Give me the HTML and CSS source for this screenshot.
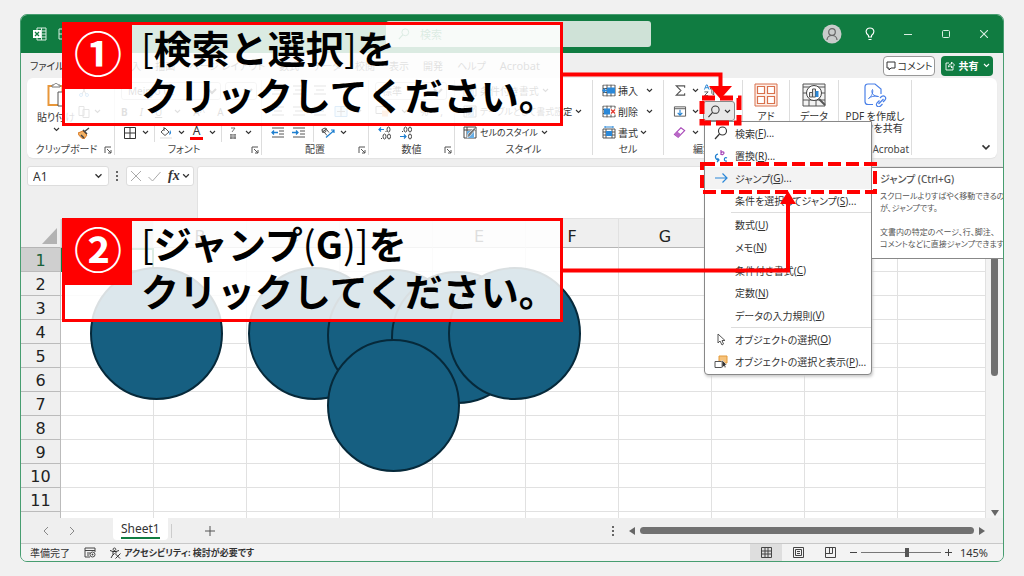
FILE: index.html
```html
<!DOCTYPE html>
<html lang="ja">
<head>
<meta charset="utf-8">
<title>Sheet1</title>
<link rel="stylesheet" href="styles.css">
</head>
<body>
<svg class="defs" aria-hidden="true">
  <symbol id="chev" viewBox="0 0 7 5"><path d="M1 1l2.5 2.5L6 1" fill="none" stroke="currentColor" stroke-width="1.100"/></symbol>
  <symbol id="launch" viewBox="0 0 8 8"><path d="M1 7V1h6M3 3l4 4M7 4v3H4" fill="none" stroke="#555"/></symbol>
  <symbol id="mag" viewBox="0 0 14 14"><circle cx="8.5" cy="5" r="4" fill="none" stroke="currentColor" stroke-width="1.1"/><path d="M5.5 8L1 13" stroke="currentColor" stroke-width="1.2"/></symbol>
  <symbol id="lines" viewBox="0 0 14 12"><path d="M1 1.500h12M3 5.500h8M1 9.500h12" stroke="#555" fill="none"/></symbol>
  <symbol id="cells" viewBox="0 0 14 12"><path d="M1 .5h12v11H1zM1 4h12M1 8h12M5 0v12M9 0v12" stroke="#555" fill="none"/></symbol>
  <symbol id="style" viewBox="0 0 14 13"><path d="M1 1h12v11H1z" fill="#fff" stroke="#444"/><path d="M1 4h12M4 1v11" stroke="#444"/><path d="M4 5h7v7H4z" fill="#66aee6"/><path d="M13 3L7 10l-3 2 1-4 6-6" fill="#777" stroke="#fff" stroke-width=".6"/></symbol>
</svg>
<main class="page">
  <div class="window">
    <header class="titlebar">
      <svg class="xl" viewBox="0 0 14 14"><path d="M4 1h9v12H4zM4 4h9M4 7h9M4 10h9M8.500 1v12" fill="none" stroke="#d9eee2"/><path d="M0 3h8v8H0z" fill="#fff"/><path d="M2 5l4 4M6 5L2 9" stroke="#107c41" stroke-width="1.300"/></svg>
      <svg class="save" viewBox="0 0 12 12"><path d="M1 1h10v10H1zM1 6h4" fill="none" stroke="#d9eee2"/></svg>
      <label class="search"><svg viewBox="0 0 14 14"><use href="#mag"/></svg><input type="text" placeholder="検索" aria-label="検索"></label>
      <div class="wincontrols">
        <button class="avatar" aria-label="アカウント"><svg viewBox="0 0 20 20"><circle cx="10" cy="10" r="9.500" fill="#c9cccb"/><circle cx="10" cy="8" r="3.300" fill="none" stroke="#666" stroke-width="1.200"/><path d="M5 16c0-6 10-6 10 0" fill="none" stroke="#666" stroke-width="1.200"/></svg></button>
        <button aria-label="ヒント"><svg class="bulb" viewBox="0 0 10 14"><path d="M3.500 10V8.500C-.5 5.500 1 1 5 1s5.500 4.500 1.500 7.500V10zM3.500 12.500h3" fill="none" stroke="#fff" stroke-width="1.100"/></svg></button>
        <button aria-label="最小化"><svg class="w8" viewBox="0 0 8 8"><path d="M0 4.500h8" stroke="#d9eee2"/></svg></button>
        <button aria-label="最大化"><svg class="w8" viewBox="0 0 8 8"><rect x=".5" y=".5" width="7" height="7" rx="1" fill="none" stroke="#d9eee2"/></svg></button>
        <button aria-label="閉じる"><svg class="w8" viewBox="0 0 8 8"><path d="M0 0l8 8M8 0L0 8" stroke="#d9eee2" stroke-width="1.100"/></svg></button>
      </div>
    </header>
    <nav class="tabs">
      <button>ファイル</button><button>ホーム</button><button>挿入</button><button>描画</button><button>ページ レイアウト</button><button>数式</button><button>データ</button><button>校閲</button><button>表示</button><button>開発</button><button>ヘルプ</button><button class="latin">Acrobat</button>
      <div class="tabactions">
        <button class="comment"><svg viewBox="0 0 10 10"><path d="M1 1h8v6H5L3 9V7H1z" fill="none" stroke="#333"/></svg>コメント</button>
        <button class="share"><svg viewBox="0 0 10 10"><path d="M4 2H1v7h7V6M3.500 6c0-2 1-3 3-3V1l3 3-3 3V5c-1.500 0-2 0-3 1z" fill="none" stroke="#fff" stroke-width=".9"/></svg>共有<svg class="chev" viewBox="0 0 7 5"><use href="#chev"/></svg></button>
      </div>
    </nav>
    <section class="ribbon">
      <div class="group clipboard">
        <div class="body split">
          <button class="tall"><svg class="paste" viewBox="0 0 18 24"><path d="M1.500 3h14v19h-14z" fill="#fff" stroke="#e8973a" stroke-width="2"/><path d="M5 4V2h2c0-2 4-2 4 0h2v2z" fill="#fff" stroke="#777"/><path d="M11 9h7v14h-7z" fill="#fff" stroke="#555"/></svg>貼り付け<svg class="chev" viewBox="0 0 7 5"><use href="#chev"/></svg></button>
          <div class="stack">
            <button aria-label="切り取り"><svg class="i12" viewBox="0 0 12 12"><path d="M3 0l5 9M9 0L4 9" stroke="#555"/><circle cx="3" cy="10" r="1.500" fill="none" stroke="#2b88d8"/><circle cx="9" cy="10" r="1.500" fill="none" stroke="#2b88d8"/></svg></button>
            <button aria-label="コピー"><svg class="i12" viewBox="0 0 12 12"><path d="M1 .5h5v9H1zM5 3.500h6v8H5z" fill="#fff" stroke="#555"/></svg><svg class="chev" viewBox="0 0 7 5"><use href="#chev"/></svg></button>
            <button aria-label="書式のコピー"><svg class="i12" viewBox="0 0 12 12"><path d="M0 6l5-2 4 4-3 4c-3-1-5-3-6-6z" fill="#f3b063" stroke="#d97a24"/><path d="M5 3l4 4M6 5l5-4M3 8l3 3" stroke="#444" stroke-width="1.500"/></svg></button>
          </div>
        </div>
        <div class="label">クリップボード<svg class="launch" viewBox="0 0 8 8"><use href="#launch"/></svg></div>
      </div>
      <div class="group font">
        <div class="body">
          <div class="line"><select class="fontname" aria-label="フォント名"><option>Meiryo UI</option></select><select class="fontsize" aria-label="サイズ"><option>11</option></select></div>
          <div class="line spread"><button><b>B</b></button><button><i>I</i></button><button><u>U</u></button><svg class="chev" viewBox="0 0 7 5"><use href="#chev"/></svg><button>A^</button><button>A</button></div>
          <div class="line icons"><button aria-label="罫線"><svg class="i12" viewBox="0 0 12 12"><path d="M.5.5h11v11H.5zM6 0v12M0 6h12" fill="none" stroke="#333"/></svg><svg class="chev" viewBox="0 0 7 5"><use href="#chev"/></svg></button><hr><button aria-label="塗りつぶし"><svg class="i12" viewBox="0 0 12 12"><path d="M1 5l4-4 4 4-4 3.500zM4 0v4" fill="#fff" stroke="#555"/><path d="M10 3c2 3 1 4-1 5z" fill="#2b88d8"/><path d="M0 10h12v2H0z" fill="#eee"/></svg><svg class="chev" viewBox="0 0 7 5"><use href="#chev"/></svg></button><button class="fontcolor" aria-label="フォントの色"><span>A</span><svg class="chev" viewBox="0 0 7 5"><use href="#chev"/></svg></button><hr><button aria-label="ふりがな"><svg class="i12" viewBox="0 0 12 12"><path d="M4 1h4L5 5" fill="none" stroke="#777"/><path d="M3 7h6v5H3z" fill="#888"/><path d="M3 9h6M6 7v5" stroke="#ddd" stroke-width=".6"/></svg><svg class="chev" viewBox="0 0 7 5"><use href="#chev"/></svg></button></div>
        </div>
        <div class="label">フォント<svg class="launch" viewBox="0 0 8 8"><use href="#launch"/></svg></div>
      </div>
      <div class="group align">
        <div class="body">
          <div class="line"><svg class="i14" viewBox="0 0 14 12"><use href="#lines"/></svg><svg class="i14" viewBox="0 0 14 12"><use href="#lines"/></svg><svg class="i14" viewBox="0 0 14 12"><use href="#lines"/></svg></div>
          <div class="line"><svg class="i14" viewBox="0 0 14 12"><use href="#lines"/></svg><svg class="i14" viewBox="0 0 14 12"><use href="#lines"/></svg><svg class="i14" viewBox="0 0 14 12"><use href="#lines"/></svg><svg class="i14" viewBox="0 0 14 12"><path d="M1 1h12v10H1z" fill="#cfe6f8" stroke="#2b88d8"/><path d="M3 6h8M7 1v10" stroke="#555"/></svg><svg class="chev" viewBox="0 0 7 5"><use href="#chev"/></svg></div>
          <div class="line"><button aria-label="インデントを減らす"><svg class="i14" viewBox="0 0 14 12"><path d="M1 1.500h12M8 4.500h5M8 7.500h5M1 10.500h12" stroke="#555"/><path d="M7 6H1m2-2L1 6l2 2" stroke="#1e7fd0" stroke-width="1.300" fill="none"/></svg></button><button aria-label="インデントを増やす"><svg class="i14" viewBox="0 0 14 12"><path d="M1 1.500h12M8 4.500h5M8 7.500h5M1 10.500h12" stroke="#555"/><path d="M0 6h6M4 4l2 2-2 2" stroke="#1e7fd0" stroke-width="1.300" fill="none"/></svg></button><hr><button aria-label="方向"><svg class="i14" viewBox="0 0 14 12"><path d="M1 3l5 6M4 1l4 5M1 6l5-4" stroke="#555"/><circle cx="3" cy="4" r="2" fill="none" stroke="#555"/><path d="M5 11l8-7M10 3.500h3v3" stroke="#1e7fd0" fill="none" stroke-width="1.200"/></svg><svg class="chev" viewBox="0 0 7 5"><use href="#chev"/></svg></button></div>
        </div>
        <div class="label">配置<svg class="launch" viewBox="0 0 8 8"><use href="#launch"/></svg></div>
      </div>
      <div class="group number">
        <div class="body">
          <div class="line"><select class="numfmt" aria-label="表示形式"><option>標準</option></select></div>
          <div class="line spread"><svg class="i14" viewBox="0 0 14 12"><path d="M1 1h12v7H1z" fill="#fff" stroke="#555"/><path d="M7 5h6v6H7z" fill="#f4a261"/></svg><svg class="chev" viewBox="0 0 7 5"><use href="#chev"/></svg><button>%</button><button>,</button></div>
          <div class="line"><button class="dec" aria-label="小数点以下の表示桁数を増やす"><svg viewBox="0 0 14 14"><path d="M6 3.500H1m2-2l-2 2 2 2" stroke="#1e7fd0" fill="none" stroke-width="1.200"/><g fill="none" stroke="#444"><ellipse cx="10.500" cy="3.500" rx="1.500" ry="2.500"/><ellipse cx="6.500" cy="10.500" rx="1.500" ry="2.500"/><ellipse cx="11" cy="10.500" rx="1.500" ry="2.500"/></g><path d="M3 12.500h1M7.500 5.500h1" stroke="#444"/></svg></button><button class="dec" aria-label="小数点以下の表示桁数を減らす"><svg viewBox="0 0 14 14"><path d="M1 10.500h6m-2-2l2 2-2 2" stroke="#1e7fd0" fill="none" stroke-width="1.200"/><g fill="none" stroke="#444"><ellipse cx="6.500" cy="3.500" rx="1.500" ry="2.500"/><ellipse cx="11" cy="3.500" rx="1.500" ry="2.500"/><ellipse cx="11" cy="10.500" rx="1.500" ry="2.500"/></g><path d="M3 5.500h1" stroke="#444"/></svg></button></div>
        </div>
        <div class="label">数値<svg class="launch" viewBox="0 0 8 8"><use href="#launch"/></svg></div>
      </div>
      <div class="group styles">
        <div class="body">
          <button class="line"><svg class="i14" viewBox="0 0 14 13"><use href="#style"/></svg>条件付き書式<svg class="chev" viewBox="0 0 7 5"><use href="#chev"/></svg></button>
          <button class="line long"><svg class="i14" viewBox="0 0 14 13"><use href="#style"/></svg>テーブルとして書式設定<svg class="chev" viewBox="0 0 7 5"><use href="#chev"/></svg></button>
          <button class="line long"><svg class="i14" viewBox="0 0 14 13"><use href="#style"/></svg>セルのスタイル<svg class="chev" viewBox="0 0 7 5"><use href="#chev"/></svg></button>
        </div>
        <div class="label">スタイル</div>
      </div>
      <div class="group cellgroup">
        <div class="body">
          <button class="line"><svg class="i14" viewBox="0 0 14 12"><use href="#cells"/><path d="M5 3h8v6H5z" fill="#2b88d8"/><path d="M6 6H1m2-2L1 6l2 2" stroke="#2b88d8" stroke-width="1.500" fill="none"/></svg>挿入<svg class="chev wide" viewBox="0 0 7 5"><use href="#chev"/></svg></button>
          <button class="line"><svg class="i14" viewBox="0 0 14 12"><use href="#cells"/><path d="M2 3h6v6H2z" fill="#2b88d8"/><path d="M8 3h6v6H8z" fill="#fff"/><path d="M9 4l4 4M13 4L9 8" stroke="#e0352b" stroke-width="1.300"/></svg>削除<svg class="chev wide" viewBox="0 0 7 5"><use href="#chev"/></svg></button>
          <button class="line"><svg class="i14" viewBox="0 0 14 13"><path d="M1 3h12v9H1zM1 6h12M1 9h12M4 3v9M10 3v9" fill="none" stroke="#555"/><path d="M4 5h6v5H4z" fill="#2b88d8"/><path d="M3 1h8M3 0v2M11 0v2" stroke="#2b88d8"/></svg>書式<svg class="chev" viewBox="0 0 7 5"><use href="#chev"/></svg></button>
        </div>
        <div class="label">セル</div>
      </div>
      <div class="group edit">
        <div class="body split">
          <div class="stack left">
            <button aria-label="合計"><svg class="i14" viewBox="0 0 14 14"><path d="M12 4V2H3l5 5-5 5h9v-2" fill="none" stroke="#555" stroke-width="1.200"/></svg><svg class="chev" viewBox="0 0 7 5"><use href="#chev"/></svg></button>
            <button aria-label="フィル"><svg class="i14" viewBox="0 0 14 14"><path d="M1 2h12v10H1zM1 4h12" fill="none" stroke="#555"/><path d="M7 5v6M4.500 8.500L7 11l2.500-2.500" stroke="#1e7fd0" stroke-width="1.200" fill="none"/></svg><svg class="chev" viewBox="0 0 7 5"><use href="#chev"/></svg></button>
            <button aria-label="クリア"><svg class="i14" viewBox="0 0 14 14"><path d="M1 9l7-7 4 3-7 7z" fill="#fff" stroke="#a848b8" stroke-width="1.200"/><path d="M1 9l3-3 4 3-3 3z" fill="#b968c7"/></svg><svg class="chev" viewBox="0 0 7 5"><use href="#chev"/></svg></button>
          </div>
          <div class="stack right">
            <button aria-label="並べ替えとフィルター"><svg class="i14" viewBox="0 0 14 14"><path d="M1 6l2-5h1l2 5M2 4h3" stroke="#1e7fd0" fill="none"/><path d="M1 8.500h4l-4 4h4M7 4h6l-2 3v5l-2-2V7z" stroke="#555" fill="none"/></svg><svg class="chev" viewBox="0 0 7 5"><use href="#chev"/></svg></button>
            <button class="find" aria-label="検索と選択"><svg class="i14" viewBox="0 0 14 14"><use href="#mag"/></svg><svg class="chev" viewBox="0 0 7 5"><use href="#chev"/></svg></button>
          </div>
        </div>
        <div class="label">編集</div>
      </div>
      <div class="group addin"><button class="tall"><svg class="i24" viewBox="0 0 24 24"><path d="M1 1h22v22H1z" fill="#fdf0ea" stroke="#d9714c"/><path d="M3.500 3.500h7v7h-7zM13.500 3.500h7v7h-7zM3.500 13.500h7v7h-7zM13.500 13.500h7v7h-7z" fill="#fff" stroke="#d9714c" stroke-width="1.200"/></svg>アド</button></div>
      <div class="group data"><button class="tall"><svg class="i24" viewBox="0 0 24 24"><path d="M1 1h22v22H1zM1 4h22M1 10h22M1 17h22M7 17v6M14 17v6" fill="#f3f3f3" stroke="#555"/><circle cx="12" cy="10" r="7.500" fill="#fff" stroke="#444"/><path d="M7.500 9.500h3V14h-3zM10.500 6h3v8h-3z" fill="#ddd" stroke="#555"/><path d="M13.500 8h3v6h-3z" fill="#2b88d8"/><path d="M17 16l6 6" stroke="#555" stroke-width="2"/></svg>データ</button></div>
      <div class="group acrobat"><button class="tall"><svg class="i24" viewBox="0 0 24 24"><path d="M10 21.500H5c-2 0-3-1-3-3V4c0-2 1-3 3-3h7l6 5v5" fill="none" stroke="#4a80e8" stroke-width="1.200"/><path d="M5.500 15.500c3-2 5-6 4-9-2 3 1 7 6 7-4-1-8 0-10 2z" fill="none" stroke="#4a80e8"/><path d="M17 15l1.500-1.500c2.500-2 5.500 1 3.500 3.500l-2 2M16.500 17.500L14 20c-2 2.500 1.500 5 3.500 3l2-2M15.500 21l5-5" fill="none" stroke="#4a80e8" stroke-width="1.200"/></svg><span>PDF を作成し</span><span>リンクを共有</span></button><div class="label">Adobe Acrobat</div></div>
      <button class="collapse" aria-label="リボンを折りたたむ"><svg viewBox="0 0 7 5"><use href="#chev"/></svg></button>
    </section>
    <section class="formulabar">
      <label class="namebox"><input type="text" value="A1" aria-label="名前ボックス"><svg viewBox="0 0 7 5"><use href="#chev"/></svg></label>
      <span class="dots"></span>
      <div class="fx"><svg viewBox="0 0 10 10"><path d="M0 0l10 10M10 0L0 10" stroke="#aaa"/></svg><svg class="tick" viewBox="0 0 12 10"><path d="M0 6l4 4 8-9" fill="none" stroke="#aaa"/></svg><i>fx</i><svg class="fxc" viewBox="0 0 7 5"><use href="#chev"/></svg></div>
      <textarea aria-label="数式バー"></textarea>
    </section>
    <section class="sheet">
      <div class="grid">
        <table>
          <thead><tr><th class="corner"><span></span></th><th class="sel">A</th><th>B</th><th>C</th><th>D</th><th>E</th><th>F</th><th>G</th><th>H</th><th>I</th><th></th></tr></thead>
          <tbody>
            <tr><th class="sel">1</th><td class="active"></td><td></td><td></td><td></td><td></td><td></td><td></td><td></td><td></td><td></td></tr>
            <tr><th>2</th><td></td><td></td><td></td><td></td><td></td><td></td><td></td><td></td><td></td><td></td></tr>
            <tr><th>3</th><td></td><td></td><td></td><td></td><td></td><td></td><td></td><td></td><td></td><td></td></tr>
            <tr><th>4</th><td></td><td></td><td></td><td></td><td></td><td></td><td></td><td></td><td></td><td></td></tr>
            <tr><th>5</th><td></td><td></td><td></td><td></td><td></td><td></td><td></td><td></td><td></td><td></td></tr>
            <tr><th>6</th><td></td><td></td><td></td><td></td><td></td><td></td><td></td><td></td><td></td><td></td></tr>
            <tr><th>7</th><td></td><td></td><td></td><td></td><td></td><td></td><td></td><td></td><td></td><td></td></tr>
            <tr><th>8</th><td></td><td></td><td></td><td></td><td></td><td></td><td></td><td></td><td></td><td></td></tr>
            <tr><th>9</th><td></td><td></td><td></td><td></td><td></td><td></td><td></td><td></td><td></td><td></td></tr>
            <tr><th>10</th><td></td><td></td><td></td><td></td><td></td><td></td><td></td><td></td><td></td><td></td></tr>
            <tr><th>11</th><td></td><td></td><td></td><td></td><td></td><td></td><td></td><td></td><td></td><td></td></tr>
            <tr><th></th><td></td><td></td><td></td><td></td><td></td><td></td><td></td><td></td><td></td><td></td></tr>
          </tbody>
        </table>
        <div class="ball b1"></div><div class="ball b2"></div><div class="ball b3"></div><div class="ball b4"></div><div class="ball b5"></div><div class="ball b6"></div>
      </div>
      <div class="vscroll"><div class="vthumb"></div><span class="down"></span></div>
    </section>
    <section class="sheettabs">
      <svg class="nav" viewBox="0 0 6 8"><path d="M5 0L1 4l4 4" fill="none" stroke="#888"/></svg>
      <svg class="nav" viewBox="0 0 6 8"><path d="M1 0l4 4-4 4" fill="none" stroke="#888"/></svg>
      <button class="tab"><span>Sheet1</span></button>
      <hr>
      <button class="add" aria-label="新しいシート"><svg viewBox="0 0 10 10"><path d="M5 0v10M0 5h10" stroke="#555"/></svg></button>
      <span class="dots tabdots"></span>
      <div class="hscroll"><span class="larr"></span><div class="hthumb"></div><span class="rarr"></span></div>
    </section>
    <footer class="status">
      <span>準備完了</span>
      <svg class="macro" viewBox="0 0 12 11"><path d="M11 5V1H1v9h5M1 3.500h10M3 6h3M3 8h2" fill="none" stroke="#444"/><circle cx="8.500" cy="7.500" r="2.500" fill="#fff" stroke="#444"/><circle cx="8.500" cy="7.500" r="1" fill="#444"/></svg>
      <svg class="access" viewBox="0 0 12 12"><path d="M1 3.500l3 1v3l-2 3.500M4 4.500h3l3-1M7 4.500v2M5.500 1a1.300 1.300 0 1 1-.1 0M4 8l1.500-1.500M6 6.500l5 5M11.500 6.500l-5 5" fill="none" stroke="#333"/></svg>
      <strong>アクセシビリティ: 検討が必要です</strong>
      <div class="views">
        <button class="on" aria-label="標準"><svg viewBox="0 0 11 11"><path d="M.5.5h10v10H.5zM.5 4h10M.5 7h10M4 .5v10M7 .5v10" fill="none" stroke="#444"/></svg></button>
        <button aria-label="ページ レイアウト"><svg viewBox="0 0 11 11"><path d="M.5.5h10v10H.5zM2.500 2.500h6v6h-6zM4 4.500h3M4 6.500h3" fill="none" stroke="#444"/></svg></button>
        <button aria-label="改ページ プレビュー"><svg viewBox="0 0 11 11"><path d="M.5.5h10v10H.5zM.5 6.500h7v-6M4.500.5v6" fill="none" stroke="#444"/></svg></button>
      </div>
      <button class="zoom" aria-label="縮小"><svg viewBox="0 0 7 7"><path d="M0 3.500h7" stroke="#444"/></svg></button>
      <input type="range" aria-label="ズーム" min="0" max="100" value="58">
      <button class="zoom" aria-label="拡大"><svg viewBox="0 0 7 7"><path d="M0 3.500h7M3.500 0v7" stroke="#444"/></svg></button>
      <span class="percent">145%</span>
    </footer>
    <div class="menu" role="menu">
      <button><svg viewBox="0 0 14 14"><use href="#mag"/></svg>検索(<u>F</u>)...</button>
      <button><svg viewBox="0 0 14 14"><path d="M7 1v5M7 4c1-2 3-1 3 0s-2 2.500-3 1" fill="none" stroke="#a848b8" stroke-width="1.200"/><path d="M4 5C0 6 1 11 5 11M3.500 9L5 11l-2 2M13 9c-3-2-4 4 0 3" fill="none" stroke="#1e7fd0" stroke-width="1.200"/></svg>置換(<u>R</u>)...</button>
      <button class="hot"><svg viewBox="0 0 14 14"><path d="M1 7h12M8.500 2.500L13 7l-4.500 4.500" fill="none" stroke="#2b88d8" stroke-width="1.200"/></svg>ジャンプ(<u>G</u>)...</button>
      <button>条件を選択してジャンプ(<u>S</u>)...</button>
      <hr>
      <button>数式(<u>U</u>)</button>
      <button>メモ(<u>N</u>)</button>
      <button>条件付き書式(<u>C</u>)</button>
      <button>定数(<u>N</u>)</button>
      <button>データの入力規則(<u>V</u>)</button>
      <hr>
      <button><svg viewBox="0 0 14 14"><path d="M4 2v9l2-2 2 4 1.500-1L8 8.500h3z" fill="#fff" stroke="#555"/></svg>オブジェクトの選択(<u>O</u>)</button>
      <button><svg viewBox="0 0 14 14"><path d="M5 1h8v7H5z" fill="#f6c27a" stroke="#e39a3a"/><path d="M1 6.500h7v6H1z" fill="#fff" stroke="#555"/><path d="M8 5v8l2-2 1 2 1-1-1-2h2z" fill="#333" stroke="#fff" stroke-width=".5"/></svg>オブジェクトの選択と表示(<u>P</u>)...</button>
    </div>
    <aside class="tip"><h2>ジャンプ (Ctrl+G)</h2><p>スクロールよりすばやく移動できるの<br>が、ジャンプです。</p><p>文書内の特定のページ、行、脚注、<br>コメントなどに直接ジャンプできます</p></aside>
  </div>
  <div class="callout first"><span class="num">①</span><p><span class="thin">[</span>検索と選択<span class="thin">]</span>を<br>クリックしてください。</p></div>
  <div class="callout second"><span class="num">②</span><p><span class="thin">[</span>ジャンプ<span class="thin">(</span>G<span class="thin">)]</span>を<br>クリックしてください。</p></div>
  <svg class="arrows" width="1024" height="576" viewBox="0 0 1024 576" aria-hidden="true">
    <g fill="none" stroke="#f00" stroke-width="4">
      <path d="M563 74.500H720.500V88M563 270.500H788V203"/>
      <rect x="702" y="98" width="37" height="25" stroke-dasharray="13 5" stroke-width="5"/>
      <rect x="702" y="164" width="173" height="28" stroke-dasharray="13 5"/>
    </g>
    <path d="M709 86h23l-11.500 13zM780 204h16l-8-13z" fill="#f00"/>
  </svg>
</main>
</body>
</html>
```
FILE: styles.css
```css
* { box-sizing: border-box; }
body { margin: 0; background: #f1f1f1; font-family: "Noto Sans", "Noto Sans CJK JP", sans-serif; font-size: 10px; color: #333; font-feature-settings: "palt"; }
button, input, select, textarea { font: inherit; font-feature-settings: inherit; color: inherit; border: 0; background: none; padding: 0; margin: 0; }
button { display: flex; align-items: center; white-space: nowrap; }
svg { flex: none; }
hr { border: 0; margin: 0; background: #ddd; }
.defs { position: absolute; width: 0; height: 0; }
.page { position: relative; height: 100vh; padding: 14px 20px; display: flex; overflow: hidden; }
.window { position: relative; flex: 1; min-width: 0; display: flex; flex-direction: column; background: #efefef; border: 1px solid #479d70; border-radius: 7px; overflow: hidden; }
.chev { width: 7px; height: 5px; }

.titlebar { flex: none; height: 38px; background: #107c41; display: flex; align-items: center; padding-left: 12px; }
.xl { width: 14px; height: 14px; }
.save { width: 12px; height: 12px; margin-left: 11px; }
.search { margin-left: 316px; width: 265px; height: 26px; border-radius: 3px; background: #cfe2d7; color: #107c41; display: flex; align-items: center; gap: 10px; padding-left: 12px; font-size: 11px; }
.search svg { width: 12px; height: 12px; }
.search input { width: 200px; }
.search input::placeholder { color: #107c41; opacity: 1; }
.wincontrols { margin-left: auto; display: flex; align-items: center; }
.wincontrols button { width: 38px; height: 38px; justify-content: center; }
.avatar svg { width: 20px; height: 20px; }
.bulb { width: 10px; height: 14px; }
.w8 { width: 8px; height: 8px; }

.tabs { flex: none; height: 25px; display: flex; align-items: center; gap: 14px; padding: 0 10px 0 9px; }
.latin { font-size: 11px; }
.tabactions { margin-left: auto; display: flex; gap: 6px; }
.tabactions button { height: 20px; border-radius: 4px; padding: 0 3px; gap: 2px; justify-content: center; }
.tabactions svg { width: 10px; height: 10px; }
.comment { width: 52px; background: #fff; border: 1px solid #999; }
.tabactions .share { width: 52px; background: #107c41; color: #fff; font-weight: 700; gap: 4px; }
.tabactions .share .chev { width: 7px; height: 5px; }

.ribbon { flex: none; height: 80px; margin: 0 6px; background: #fff; border-radius: 6px; display: flex; padding: 2px 6px 3px 0; box-shadow: 0 1px 1px #e2e2e2; }
.group { flex: none; border-right: 1px solid #ddd; display: flex; flex-direction: column; overflow: hidden; }
.body { height: 63px; }
.body .line, .stack button { height: 21px; display: flex; align-items: center; gap: 4px; }
.split { display: flex; }
.label { position: relative; text-align: center; line-height: 12px; color: #444; white-space: nowrap; }
.launch { position: absolute; right: 2px; top: 3px; width: 8px; height: 8px; }
.clipboard .label, .font .label { padding-right: 8px; }
.tall { flex-direction: column; width: 100%; line-height: 12px; padding-top: 3px; }
.i12 { width: 12px; height: 12px; }
.i14 { width: 14px; height: 13px; }
.i24 { width: 24px; height: 24px; margin-bottom: 3px; }
.clipboard { width: 88px; }
.clipboard .tall { width: 51px; gap: 4px; padding-left: 7px; }
.paste { width: 18px; height: 24px; }
.font { width: 147px; }
.font .line { padding-left: 6px; }
.font select, .numfmt { height: 18px; border: 1px solid #bbb; border-radius: 3px; padding: 0 2px; }
.fontname { width: 100px; }
.fontsize { width: 32px; }
.body .spread { gap: 12px; }
.body .icons { gap: 5px; padding-left: 9px; }
.body .icons button { gap: 6px; }
.line hr { width: 1px; height: 18px; }
.fontcolor span { width: 13px; line-height: 12px; font-size: 12px; border-bottom: 3px solid #f00; text-align: center; }
.align { width: 107px; }
.align .line { gap: 7px; padding-left: 9px; }
.align button { gap: 5px; }
.number { width: 86px; }
.number .line { padding-left: 6px; }
.numfmt { width: 72px; }
.number .line:last-child { gap: 7px; padding-left: 9px; }
.dec svg { width: 14px; height: 14px; }
.styles { width: 138px; }
.styles .line { padding-left: 8px; gap: 3px; }
.styles .long { font-size: 9px; }
.cellgroup { width: 71px; font-size: 10px; }
.cellgroup .line { padding-left: 9px; gap: 2px; }
.cellgroup .wide { margin-left: 6px; }
.edit { width: 79px; }
.left { width: 36px; padding-left: 9px; margin-right: 3px; }
.left button { gap: 5px; }
.right button { gap: 3px; }
.stack .find { width: 32px; height: 20px; padding-left: 3px; border: 1px solid #888; border-radius: 3px; background: #e8e8e8; }
.addin { width: 47px; }
.data { width: 49px; }
.acrobat { width: 73px; }
.acrobat .label { margin-top: auto; align-self: flex-end; padding-right: 2px; }
.collapse { margin-left: auto; align-self: flex-end; height: 16px; }
.collapse svg { width: 10px; height: 7px; }

.formulabar { flex: none; display: flex; padding: 8px 0 0 6px; height: 61px; align-items: flex-start; }
.namebox { width: 82px; height: 20px; display: flex; align-items: center; padding: 0 5px; background: #fff; border: 1px solid #ddd; border-radius: 3px; font-size: 12px; }
.namebox input { flex: 1; min-width: 0; }
.namebox svg, .fxc { width: 9px; height: 6px; }
.dots { width: 2px; height: 10px; margin: 5px 8px 0 7px; background: repeating-linear-gradient(#666 0 2px, transparent 2px 4px); }
.fx { width: 68px; height: 20px; display: flex; align-items: center; gap: 7px; padding-left: 4px; background: #fff; border: 1px solid #ddd; border-radius: 3px; }
.fx svg { width: 10px; height: 10px; }
.fx .tick { width: 13px; }
.fx i { font: italic 700 14px "Liberation Serif", serif; }
.fx .fxc { width: 8px; height: 6px; margin-left: -5px; }
textarea { flex: 1; align-self: stretch; margin-left: 3px; background: #fff; border: 1px solid #e2e2e2; border-radius: 3px 0 0 0; resize: none; }

.sheet { flex: 1; min-height: 0; display: flex; }
.grid { position: relative; flex: 1; min-width: 0; overflow: hidden; background: #fff; }
table { width: 100%; table-layout: fixed; border-collapse: separate; border-spacing: 0; font-family: "DejaVu Sans", sans-serif; font-size: 16px; }
th, td { height: 24px; padding: 0; border-right: 1px solid #e1e1e1; border-bottom: 1px solid #e1e1e1; line-height: 20px; }
th { width: 93px; font-weight: 400; color: #222; background: #efefef; }
thead th { height: 29px; border-bottom-color: #b5b5b5; padding-top: 7px; }
thead th:last-child { width: auto; }
thead .corner { width: 40px; padding: 0; }
.corner span { display: block; margin: 6px 3px 0 21px; height: 16px; background: #b3b3b3; clip-path: polygon(100% 0, 100% 100%, 0 100%); }
tbody th { border-color: #bbb; padding-top: 2px; }
.sel { background: #cfcfcf; color: #17613a; }
.active { border: 2px solid #107c41; }
.ball { position: absolute; width: 133px; height: 133px; border: 2px solid #06293a; border-radius: 50%; background: #165f81; }
.b1 { left: 69px; top: 48px; }
.b2 { left: 227px; top: 48px; }
.b3 { left: 306px; top: 50px; }
.b4 { left: 370px; top: 52px; }
.b5 { left: 427px; top: 48px; }
.b6 { left: 306px; top: 120px; }
.vscroll { width: 17px; background: #f3f3f3; display: flex; flex-direction: column; align-items: center; justify-content: space-between; padding-bottom: 2px; }
.vthumb { width: 7px; height: 133px; margin-top: 24px; border-radius: 4px; background: #717171; }
.down { border: 4px solid transparent; border-top: 6px solid #666; border-bottom: 0; }

.sheettabs { flex: none; height: 25px; display: flex; align-items: center; padding: 0 18px 0 22px; background: #efefef; }
.nav { width: 6px; height: 8px; margin-right: 20px; }
.tab { height: 22px; align-self: flex-start; margin-left: 18px; padding: 0 8px; background: #fff; border-radius: 0 0 4px 4px; font-size: 12px; }
.tab span { border-bottom: 2px solid #107c41; line-height: 17px; }
.sheettabs hr { width: 1px; height: 14px; margin-left: 3px; background: #ccc; }
.add { margin-left: 33px; }
.add svg { width: 10px; height: 10px; }
.tabdots { margin: 0 15px 0 auto; }
.hscroll { width: 356px; display: flex; align-items: center; justify-content: space-between; gap: 5px; }
.hthumb { flex: 1; height: 7px; border-radius: 4px; background: #717171; }
.larr, .rarr { border: 4px solid transparent; border-width: 4px 6px; }
.larr { border-right-color: #666; border-left: 0; }
.rarr { border-left-color: #666; border-right: 0; }

.status { flex: none; height: 18px; border-top: 1px solid #c8c8c8; background: #f3f3f3; display: flex; align-items: center; padding: 0 15px 0 9px; font-size: 10px; line-height: 16px; }
.status strong { font-size: 9px; }
.macro { width: 12px; height: 11px; margin-left: 14px; }
.access { width: 12px; height: 12px; margin: 0 3px 0 13px; }
.views { margin-left: auto; display: flex; align-self: stretch; }
.views button { width: 32px; justify-content: center; }
.views .on { background: #dedede; }
.views svg { width: 11px; height: 11px; }
.zoom { margin: 0 4px; }
.zoom svg { width: 7px; height: 7px; }
.status input { appearance: none; width: 80px; height: 16px; background: linear-gradient(#777, #777) center / 100% 1px no-repeat; }
.status input::-webkit-slider-thumb { appearance: none; width: 4px; height: 9px; background: #555; }
.percent { width: 32px; text-align: right; font-size: 11px; }

.menu { position: absolute; left: 683px; top: 106px; width: 168px; height: 254px; background: #fff; border: 1px solid #888; border-radius: 0 0 4px 4px; display: flex; flex-direction: column; justify-content: space-between; padding-bottom: 1px; box-shadow: 1px 2px 3px #ccc; }
.menu button { height: 22px; padding-left: 30px; }
.menu button svg { width: 14px; height: 14px; margin: 0 7px 0 -21px; }
.menu hr { height: 1px; margin-left: 26px; }
.menu .hot { background: #f3f3f3; }
.tip { position: absolute; left: 850px; top: 152px; width: 260px; height: 92px; padding: 5px 8px; background: #fff; border: 1px solid #888; color: #555; font-size: 8px; line-height: 12px; white-space: nowrap; }
.tip h2 { margin: 0 0 4px; font-size: 10px; line-height: 13px; font-weight: 500; }
.tip p { margin: 0 0 12px; }

.callout { position: absolute; left: 62px; width: 501px; height: 104px; border: 3px solid #f00; background: rgba(255, 255, 255, .85); color: #000; display: flex; align-items: flex-start; }
.first { top: 22px; }
.second { top: 218px; }
.num { flex: none; width: 67px; height: 64px; padding-right: 1px; background: #f00; color: #fff; font: 700 48px/53px "Noto Sans CJK JP", sans-serif; text-align: center; }
.callout p { margin: -2px 0 0; padding-left: 9px; font: 700 38px/47px "Noto Sans CJK JP", sans-serif; font-feature-settings: normal; white-space: nowrap; }
.callout .thin { font-weight: 400; }
.arrows { position: absolute; left: 0; top: 0; }
```
